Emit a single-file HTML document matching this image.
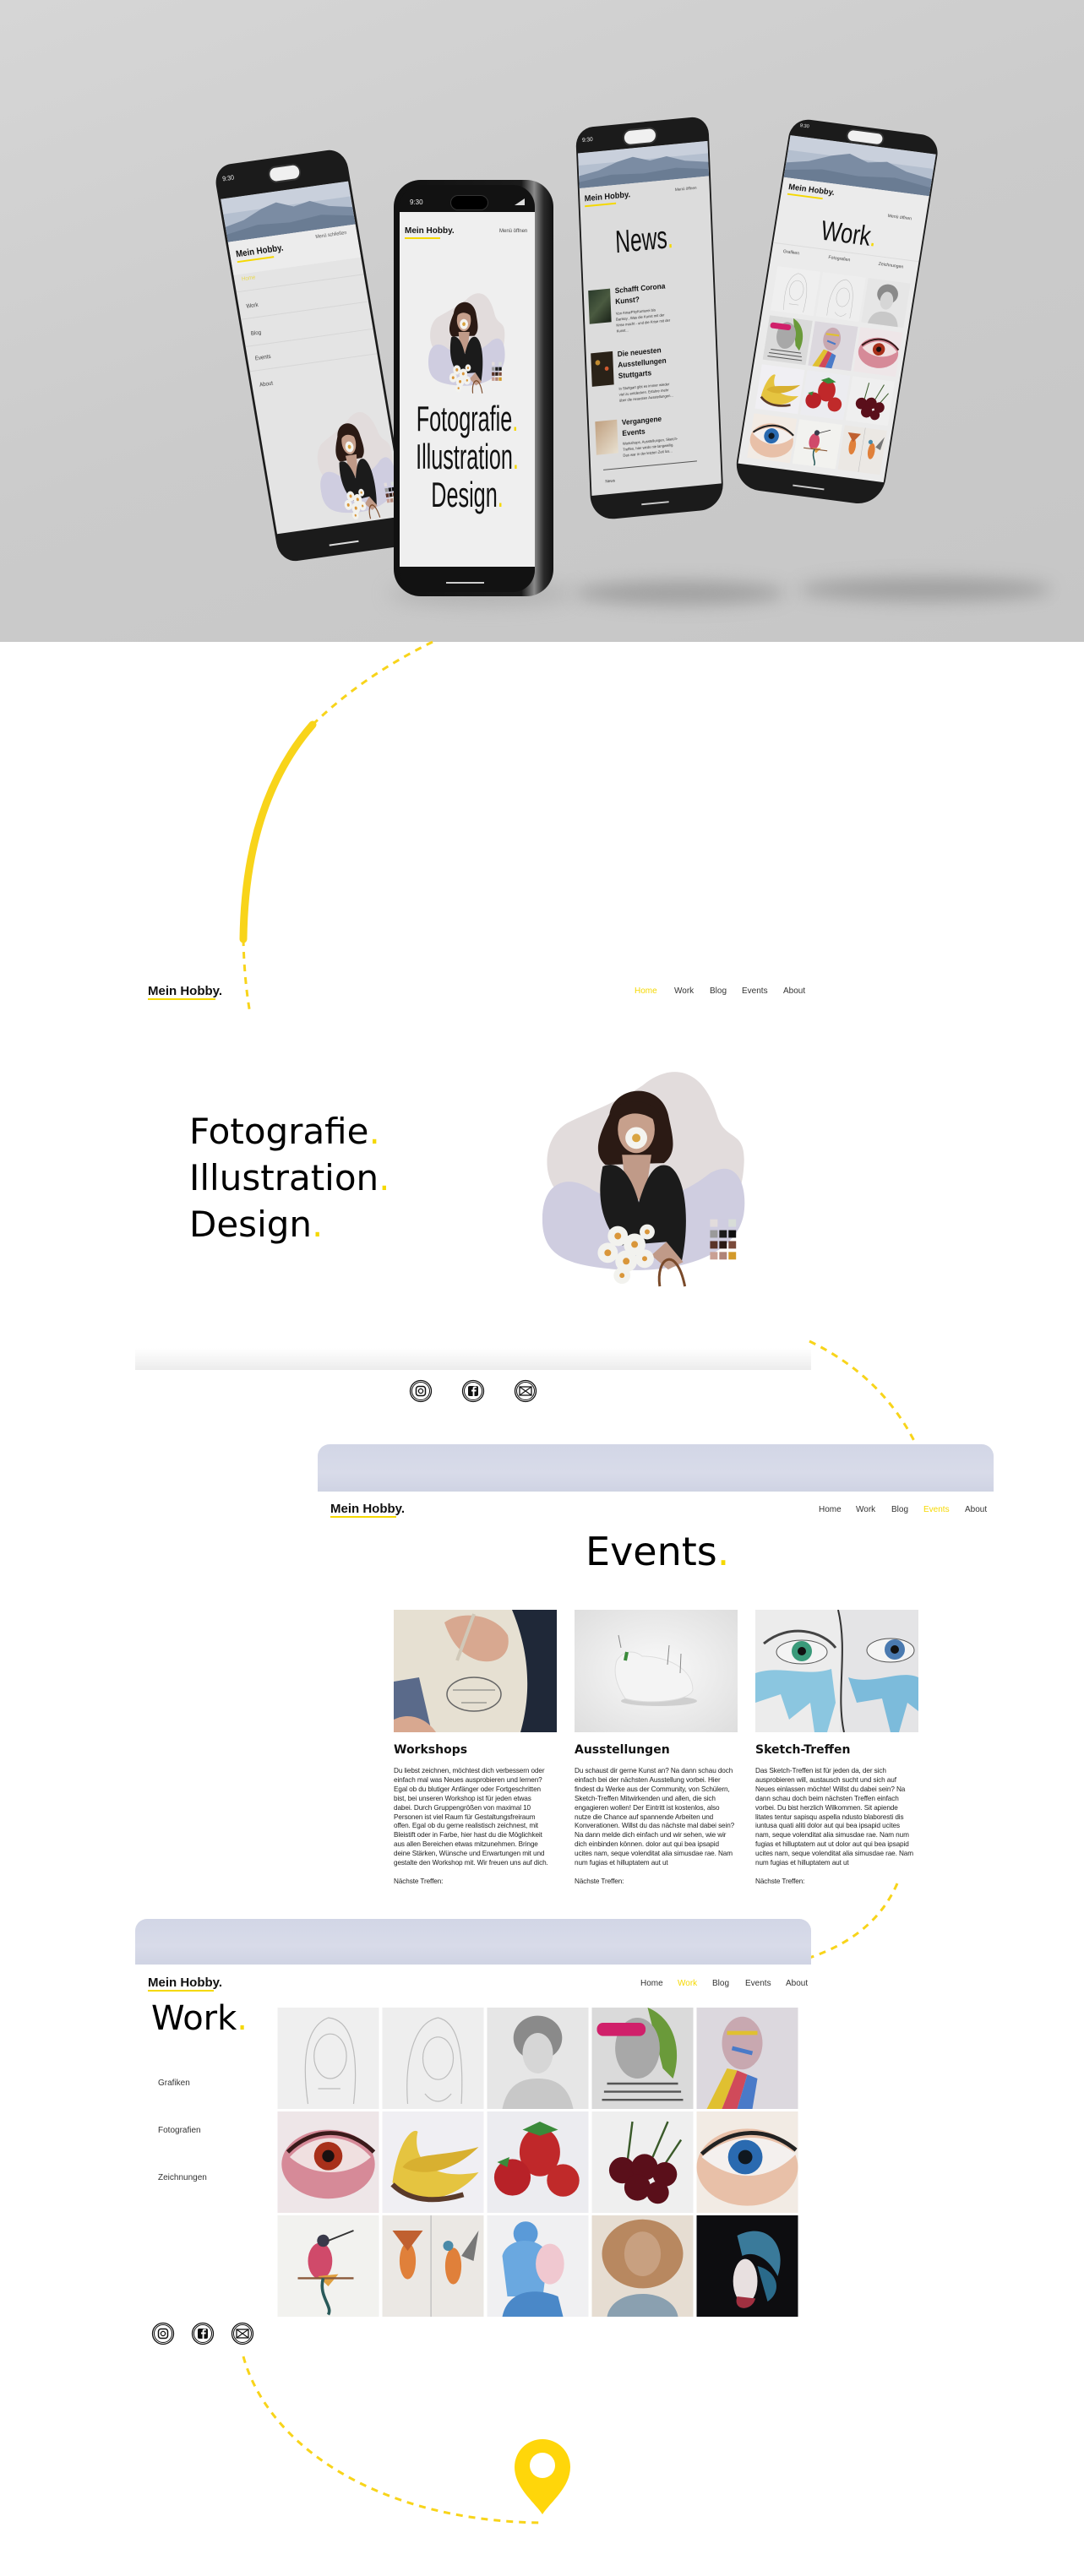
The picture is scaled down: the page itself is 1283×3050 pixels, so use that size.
<!DOCTYPE html>
<html><head><meta charset="utf-8">
<style>
*{margin:0;padding:0;box-sizing:border-box}
body{width:1283px;height:3050px;background:#fff;position:relative;overflow:hidden;font-family:"Liberation Sans",sans-serif;color:#111}
.a{position:absolute}
.y{color:#f5d800}
.nav{font-size:10px;color:#333;white-space:nowrap}
.logo{font-weight:bold;white-space:nowrap}
.ul{background:#f5d800;height:2px}
.ph{position:absolute;left:0;top:0;transform-origin:0 0;background:#1b1b1b;border-radius:24px;overflow:hidden}
.scr{position:absolute;overflow:hidden}
.t{position:absolute;white-space:nowrap}
.ev p{font-size:8.2px;line-height:10.9px;letter-spacing:-0.1px;color:#222;white-space:nowrap}
.ev h3{font-family:"DejaVu Sans",sans-serif;font-size:14px;font-weight:bold;margin:0 0 12px}
.cell{position:absolute;width:121px;height:120px}
</style></head><body>

<svg width="0" height="0" style="position:absolute">
<defs>
<symbol id="girl" viewBox="0 0 245 270">
<path d="M120,25 C150,0 190,0 208,60 C218,95 245,75 240,125 C236,175 205,200 170,235 L80,240 C40,230 55,175 30,160 C0,150 -5,90 30,70 C60,55 90,45 120,25Z" fill="#e2dcdc"/>
<path d="M0,185 C0,140 30,130 60,150 C95,170 150,170 200,130 C235,110 245,150 240,180 C230,230 160,250 90,245 C30,240 0,230 0,185Z" fill="#cfcde0"/>
<path d="M80,60 C85,25 140,20 150,60 C155,85 162,105 145,118 L75,120 C58,105 70,80 80,60Z" fill="#2b1a14"/>
<ellipse cx="112" cy="78" rx="22" ry="28" fill="#c7a08c"/>
<path d="M85,55 C95,40 130,40 140,60 L138,70 C120,55 100,55 88,70Z" fill="#2b1a14"/>
<path d="M95,108 L130,108 L122,165 L100,155Z" fill="#c09a88"/>
<path d="M72,122 C95,112 108,140 115,165 C125,132 135,115 152,122 C172,135 176,190 166,236 L148,242 L148,212 L95,216 C78,200 62,170 72,122Z" fill="#1b1b1b"/>
<path d="M148,212 L168,236 L150,245 L130,228Z" fill="#c09a88"/>
<circle cx="112" cy="88" r="13" fill="#f4f4f0"/><circle cx="112" cy="88" r="5" fill="#d9a441"/>
<g fill="#f2f2ee"><circle cx="90" cy="205" r="12"/><circle cx="110" cy="215" r="13"/><circle cx="78" cy="225" r="12"/><circle cx="100" cy="235" r="13"/><circle cx="122" cy="232" r="11"/><circle cx="95" cy="252" r="10"/><circle cx="125" cy="200" r="9"/></g>
<g fill="#d9963a"><circle cx="90" cy="205" r="4"/><circle cx="110" cy="215" r="4"/><circle cx="78" cy="225" r="4"/><circle cx="100" cy="235" r="4"/><circle cx="122" cy="232" r="3"/><circle cx="95" cy="252" r="3"/><circle cx="125" cy="200" r="3"/></g>
<path d="M140,265 C135,230 160,215 170,265" fill="none" stroke="#7a4a2a" stroke-width="3"/>
<rect x="200" y="185" width="9" height="9" fill="#e2dcdc"/><rect x="211" y="185" width="9" height="9" fill="#cfcde0"/><rect x="222" y="185" width="9" height="9" fill="#d8ddd8"/>
<rect x="200" y="198" width="9" height="9" fill="#9a9a9a"/><rect x="211" y="198" width="9" height="9" fill="#1b1b1b"/><rect x="222" y="198" width="9" height="9" fill="#101010"/>
<rect x="200" y="211" width="9" height="9" fill="#5a3428"/><rect x="211" y="211" width="9" height="9" fill="#2b1a14"/><rect x="222" y="211" width="9" height="9" fill="#7a4a3a"/>
<rect x="200" y="224" width="9" height="9" fill="#c9a094"/><rect x="211" y="224" width="9" height="9" fill="#b08478"/><rect x="222" y="224" width="9" height="9" fill="#d39a2a"/>
</symbol>
<symbol id="mtn" viewBox="0 0 100 40" preserveAspectRatio="none">
<rect width="100" height="40" fill="#b4bfcf"/><rect width="100" height="14" fill="#c9d0dc"/>
<path d="M0,40 L0,26 L15,22 L30,14 L42,10 L55,16 L68,13 L82,20 L100,24 L100,40Z" fill="#7b8ca3"/>
<path d="M0,40 L0,33 L25,28 L50,30 L75,27 L100,32 L100,40Z" fill="#6a7c93"/>
</symbol>
<symbol id="a1" viewBox="0 0 100 100"><rect width="100" height="100" fill="#efefef"/><g fill="none" stroke="#bcbcbc" stroke-width="1"><path d="M30,95 C25,60 25,20 50,10 C75,12 80,50 75,95"/><ellipse cx="52" cy="48" rx="16" ry="22"/><path d="M40,80 L62,80"/></g></symbol>
<symbol id="a2" viewBox="0 0 100 100"><rect width="100" height="100" fill="#eeeeee"/><g fill="none" stroke="#bdbdbd" stroke-width="1"><path d="M25,95 C22,55 30,15 55,10 C78,15 80,55 78,95"/><ellipse cx="55" cy="50" rx="15" ry="21"/><path d="M42,85 C50,95 60,95 68,85"/></g></symbol>
<symbol id="a3" viewBox="0 0 100 100"><rect width="100" height="100" fill="#e6e6e6"/><ellipse cx="50" cy="30" rx="24" ry="22" fill="#8a8a8a"/><ellipse cx="50" cy="45" rx="15" ry="20" fill="#d6d6d6"/><path d="M15,100 C20,75 35,70 50,70 C65,70 80,75 85,100Z" fill="#c8c8c8"/></symbol>
<symbol id="a4" viewBox="0 0 100 100"><rect width="100" height="100" fill="#dadada"/><path d="M55,0 C80,10 90,40 80,70 L70,60 Z" fill="#6a9a3a"/><ellipse cx="45" cy="40" rx="22" ry="30" fill="#a8a8a8"/><rect x="5" y="15" width="48" height="13" rx="6" fill="#d0206a"/><g stroke="#555" stroke-width="2"><path d="M15,75 L85,75"/><path d="M12,83 L88,83"/><path d="M10,91 L90,91"/></g></symbol>
<symbol id="a5" viewBox="0 0 100 100"><rect width="100" height="100" fill="#dcd8de"/><ellipse cx="45" cy="35" rx="20" ry="26" fill="#c8a8b0"/><path d="M10,100 L30,60 L40,62 L25,100Z" fill="#e0c030"/><path d="M25,100 L40,62 L50,66 L40,100Z" fill="#d04a5a"/><path d="M40,100 L50,66 L60,70 L55,100Z" fill="#4a7ac8"/><path d="M30,25 L60,25" stroke="#e0c030" stroke-width="4"/><path d="M35,40 L55,45" stroke="#4a7ac8" stroke-width="4"/></symbol>
<symbol id="a6" viewBox="0 0 100 100"><rect width="100" height="100" fill="#eee6e8"/><ellipse cx="50" cy="52" rx="46" ry="34" fill="#d68a98"/><path d="M12,45 C35,20 70,20 92,45 C70,65 35,65 12,45Z" fill="#f0e0e0"/><circle cx="50" cy="44" r="14" fill="#a8301a"/><circle cx="50" cy="44" r="6" fill="#1a1010"/><path d="M10,40 C35,15 70,15 95,40" stroke="#3a1a1a" stroke-width="4" fill="none"/></symbol>
<symbol id="a7" viewBox="0 0 100 100"><rect width="100" height="100" fill="#f0eff3"/><path d="M10,70 C15,30 30,15 35,20 C30,40 40,70 95,60 C70,90 30,95 10,70Z" fill="#e5c440"/><path d="M20,55 C30,40 60,45 95,35 C70,60 40,65 20,55Z" fill="#d8b030"/><path d="M10,72 C30,92 60,88 80,82" stroke="#5a3a2a" stroke-width="5" fill="none"/></symbol>
<symbol id="a8" viewBox="0 0 100 100"><rect width="100" height="100" fill="#ececf0"/><ellipse cx="52" cy="40" rx="20" ry="24" fill="#c0282a"/><ellipse cx="25" cy="65" rx="18" ry="18" fill="#b82228"/><ellipse cx="75" cy="68" rx="16" ry="16" fill="#c02a2a"/><path d="M35,18 L52,10 L70,18 L52,24Z" fill="#3a8a3a"/><path d="M10,50 L22,45 L20,55Z" fill="#3a8a3a"/></symbol>
<symbol id="a9" viewBox="0 0 100 100"><rect width="100" height="100" fill="#efefef"/><g stroke="#3a5a2a" stroke-width="2" fill="none"><path d="M35,50 L40,10"/><path d="M60,45 L75,10"/><path d="M70,55 L88,28"/></g><g fill="#5a0f1a"><circle cx="30" cy="58" r="13"/><circle cx="52" cy="55" r="13"/><circle cx="72" cy="62" r="12"/><circle cx="45" cy="75" r="13"/><circle cx="65" cy="80" r="11"/></g></symbol>
<symbol id="a10" viewBox="0 0 100 100"><rect width="100" height="100" fill="#f2ebe4"/><ellipse cx="50" cy="55" rx="50" ry="38" fill="#e8c0a8"/><path d="M5,45 C35,20 70,20 98,42 C70,70 35,70 5,45Z" fill="#f4f0ee"/><circle cx="48" cy="45" r="17" fill="#2a6ab0"/><circle cx="48" cy="45" r="7" fill="#101820"/><path d="M5,42 C35,15 70,15 98,38" stroke="#222" stroke-width="4" fill="none"/></symbol>
<symbol id="a11" viewBox="0 0 100 100"><rect width="100" height="100" fill="#f2f2ef"/><ellipse cx="42" cy="45" rx="12" ry="18" fill="#d04a6a"/><circle cx="45" cy="25" r="6" fill="#3a3a4a"/><path d="M50,25 L75,15" stroke="#333" stroke-width="1.5"/><path d="M40,60 L50,70 L60,58Z" fill="#e0a040"/><path d="M20,62 L75,62" stroke="#8a5a3a" stroke-width="2"/><path d="M45,62 C40,80 55,90 50,98" stroke="#2a5a5a" stroke-width="3" fill="none"/></symbol>
<symbol id="a12" viewBox="0 0 100 100"><rect width="100" height="100" fill="#ebe8e4"/><path d="M48,0 L48,100" stroke="#bbb"/><ellipse cx="25" cy="45" rx="8" ry="18" fill="#e0803a"/><path d="M10,15 L25,35 L40,15" fill="#c06030"/><ellipse cx="70" cy="50" rx="8" ry="18" fill="#e0803a"/><circle cx="65" cy="30" r="5" fill="#4a8aa8"/><path d="M78,40 L95,15 L90,45Z" fill="#777"/></symbol>
<symbol id="a13" viewBox="0 0 100 100"><rect width="100" height="100" fill="#f0f0f2"/><circle cx="38" cy="18" r="12" fill="#5a9ad8"/><path d="M15,40 C20,20 55,20 60,40 L55,80 L20,80Z" fill="#6aa8e0"/><ellipse cx="62" cy="48" rx="14" ry="20" fill="#f0c8d0"/><path d="M15,100 C20,75 45,70 70,80 L75,100Z" fill="#4a88c8"/></symbol>
<symbol id="a14" viewBox="0 0 100 100"><rect width="100" height="100" fill="#e6ddd2"/><ellipse cx="50" cy="38" rx="40" ry="34" fill="#b88860"/><ellipse cx="50" cy="38" rx="18" ry="22" fill="#c8a080"/><path d="M15,100 C20,70 80,70 85,100Z" fill="#8aa0b0"/></symbol>
<symbol id="a15" viewBox="0 0 100 100"><rect width="100" height="100" fill="#0d0d10"/><path d="M40,20 C70,5 90,30 80,60 C70,40 55,35 45,40Z" fill="#3a7a9a"/><ellipse cx="48" cy="65" rx="12" ry="22" fill="#e8e0e0"/><path d="M40,80 C35,95 55,95 58,82Z" fill="#a03040"/><path d="M60,50 C80,55 85,75 70,85Z" fill="#2a6a8a"/></symbol>
</defs>
</svg>

<!-- HERO MOCKUP -->
<div class="a" style="left:0;top:0;width:1283px;height:760px;background:linear-gradient(160deg,#d6d6d6,#cbcbcb 50%,#c6c6c6)"></div>
<div class="a" style="left:680px;top:688px;width:250px;height:28px;border-radius:50%;background:#8f8f8f;filter:blur(10px);opacity:.7"></div>
<div class="a" style="left:945px;top:684px;width:300px;height:28px;border-radius:50%;background:#8f8f8f;filter:blur(10px);opacity:.7"></div>
<div class="a" style="left:460px;top:690px;width:220px;height:26px;border-radius:50%;background:#a0a0a0;filter:blur(12px);opacity:.6"></div>

<!-- phone 1 -->
<div class="ph" style="width:180px;height:480px;transform:matrix(0.867,-0.122,0.165,0.979,252,197)">
 <div class="t" style="left:10px;top:12px;color:#eee;font-size:8px">9:30</div>
 <div class="t" style="left:72px;top:10px;width:44px;height:20px;border-radius:10px;background:#f0f0f0;border:2px solid #333"></div>
 <div class="scr" style="left:3px;top:40px;width:174px;height:405px;background:#e4e4e4">
  <svg class="a" style="left:0;top:0" width="174" height="52"><use href="#mtn" width="174" height="52"/></svg>
  <div class="a" style="left:0;top:52px;width:174px;height:40px;background:#ececec"></div>
  <div class="t logo" style="left:8px;top:62px;font-size:11px">Mein Hobby.</div>
  <div class="a ul" style="left:8px;top:76px;width:50px"></div>
  <div class="t" style="left:118px;top:58px;font-size:6px;color:#555">Menü schließen</div>
  <div class="t" style="left:10px;top:95px;font-size:7px;color:#e8d850">Home</div>
  <div class="a" style="left:0;top:112px;width:174px;height:1px;background:#d6d6d6"></div>
  <div class="t" style="left:10px;top:128px;font-size:7px;color:#444">Work</div>
  <div class="a" style="left:0;top:145px;width:174px;height:1px;background:#d6d6d6"></div>
  <div class="t" style="left:10px;top:161px;font-size:7px;color:#444">Blog</div>
  <div class="a" style="left:0;top:178px;width:174px;height:1px;background:#d6d6d6"></div>
  <div class="t" style="left:10px;top:191px;font-size:7px;color:#444">Events</div>
  <div class="a" style="left:0;top:208px;width:174px;height:1px;background:#d6d6d6"></div>
  <div class="t" style="left:10px;top:223px;font-size:7px;color:#444">About</div>
  <svg class="a" style="left:68px;top:270px" width="105" height="135" viewBox="0 0 245 270" preserveAspectRatio="none"><use href="#girl"/></svg>
 </div>
 <div class="a" style="left:70px;top:466px;width:40px;height:2px;background:#ddd"></div>
</div>

<!-- phone 2 front -->
<div class="a" style="left:466px;top:213px;width:189px;height:493px;border-radius:32px;background:linear-gradient(90deg,#111 0,#1a1a1a 80%,#8a8a8a 88%,#2a2a2a 94%,#111 100%)">
 <div class="a" style="left:7px;top:6px;width:160px;height:482px;border-radius:26px;background:#121212;overflow:hidden">
  <div class="t" style="left:12px;top:16px;color:#eee;font-size:8px">9:30</div>
  <div class="a" style="left:60px;top:12px;width:45px;height:18px;border-radius:9px;background:#000;border:1px solid #333"></div>
  <div class="a" style="left:136px;top:16px;width:12px;height:8px;background:#ddd;clip-path:polygon(100% 0,100% 100%,0 100%)"></div>
  <div class="scr" style="left:0;top:32px;width:160px;height:420px;background:#efefef">
   <div class="t logo" style="left:6px;top:17px;font-size:10px">Mein Hobby.</div>
   <div class="a ul" style="left:6px;top:30px;width:42px"></div>
   <div class="t" style="left:118px;top:20px;font-size:6px;color:#444">Menü öffnen</div>
   <svg class="a" style="left:34px;top:92px" width="92" height="125" viewBox="0 0 245 270" preserveAspectRatio="none"><use href="#girl"/></svg>
   <div class="t" style="left:-40px;width:240px;top:222px;text-align:center;font-size:42px;line-height:45px;transform:scaleX(.6)">Fotografie<span class="y">.</span></div>
   <div class="t" style="left:-40px;width:240px;top:267px;text-align:center;font-size:42px;line-height:45px;transform:scaleX(.6)">Illustration<span class="y">.</span></div>
   <div class="t" style="left:-40px;width:240px;top:312px;text-align:center;font-size:42px;line-height:45px;transform:scaleX(.6)">Design<span class="y">.</span></div>
  </div>
  <div class="a" style="left:55px;top:470px;width:45px;height:2px;background:#ccc"></div>
 </div>
</div>

<!-- phone 3 news -->
<div class="ph" style="width:170px;height:470px;border-radius:22px 22px 30px 30px;transform:matrix(0.924,-0.088,0.040,0.989,681,152)">
 <div class="t" style="left:8px;top:12px;color:#eee;font-size:7px">9:30</div>
 <div class="t" style="left:60px;top:7px;width:44px;height:20px;border-radius:10px;background:#f0f0f0;border:2px solid #333"></div>
 <div class="scr" style="left:2px;top:30px;width:166px;height:410px;background:#dcdcdc">
  <svg class="a" style="left:0;top:0" width="166" height="42"><use href="#mtn" width="166" height="42"/></svg>
  <div class="t logo" style="left:6px;top:50px;font-size:10px">Mein Hobby.</div>
  <div class="a ul" style="left:6px;top:63px;width:40px"></div>
  <div class="t" style="left:122px;top:52px;font-size:5px;color:#444">Menü öffnen</div>
  <div class="t" style="left:-20px;width:200px;top:90px;text-align:center;font-size:38px;transform:scaleX(.7)">News<span class="y">.</span></div>
  <div class="a" style="left:6px;top:165px;width:28px;height:40px;background:linear-gradient(135deg,#2a3a2a,#4a5a40,#1a2218)"></div>
  <div class="t" style="left:40px;top:162px;font-size:9px;font-weight:bold;line-height:13px">Schafft Corona<br>Kunst?</div>
  <div class="t" style="left:40px;top:192px;font-size:4.5px;line-height:7px;color:#333">Von AmarPhyKunterei bis<br>Banksy...Was die Kunst mit der<br>Krise macht - und die Krise mit der<br>Kunst...</div>
  <div class="a" style="left:6px;top:240px;width:28px;height:40px;background:radial-gradient(circle at 30% 30%,#c08a30 0 8%,transparent 10%),radial-gradient(circle at 70% 50%,#d05a30 0 8%,transparent 10%),#2a2218"></div>
  <div class="t" style="left:40px;top:238px;font-size:9px;font-weight:bold;line-height:13px">Die neuesten<br>Ausstellungen<br>Stuttgarts</div>
  <div class="t" style="left:40px;top:282px;font-size:4.5px;line-height:7px;color:#333">In Stuttgart gibt es immer wieder<br>viel zu entdecken. Erfahre mehr<br>über die neuesten Ausstellungen...</div>
  <div class="a" style="left:8px;top:322px;width:28px;height:40px;background:linear-gradient(135deg,#c0a080,#e8e0d0)"></div>
  <div class="t" style="left:42px;top:320px;font-size:9px;font-weight:bold;line-height:13px">Vergangene<br>Events</div>
  <div class="t" style="left:42px;top:348px;font-size:4.5px;line-height:7px;color:#333">Workshops, Ausstellungen, Sketch-<br>Treffen, hier wirds nie langweilig.<br>Das war in der letzten Zeit los...</div>
  <div class="a" style="left:16px;top:380px;width:120px;height:1px;background:#555"></div>
  <div class="t" style="left:18px;top:392px;font-size:5px;color:#333">News</div>
 </div>
 <div class="a" style="left:65px;top:455px;width:35px;height:2px;background:#ccc"></div>
</div>

<!-- phone 4 work -->
<div class="ph" style="width:190px;height:460px;border-radius:24px 24px 34px 34px;transform:matrix(0.926,0.121,-0.152,0.952,937,139)">
 <div class="t" style="left:12px;top:6px;color:#eee;font-size:6px">9:30</div>
 <div class="t" style="left:72px;top:4px;width:48px;height:17px;border-radius:9px;background:#f0f0f0;border:2px solid #333"></div>
 <div class="scr" style="left:2px;top:22px;width:186px;height:408px;background:#ebebeb">
  <svg class="a" style="left:0;top:0" width="186" height="52"><use href="#mtn" width="186" height="52"/></svg>
  <div class="t logo" style="left:8px;top:58px;font-size:10px">Mein Hobby.</div>
  <div class="a ul" style="left:8px;top:71px;width:45px"></div>
  <div class="t" style="left:138px;top:80px;font-size:5.5px;color:#444">Menü öffnen</div>
  <div class="t" style="left:-7px;width:200px;top:92px;text-align:center;font-size:34px;transform:scaleX(.8)">Work<span class="y">.</span></div>
  <div class="a" style="left:0;top:133px;width:186px;height:1px;background:#dcdcdc"></div>
  <div class="t" style="left:14px;top:140px;font-size:5.5px;color:#444">Grafiken</div>
  <div class="t" style="left:72px;top:140px;font-size:5.5px;color:#444">Fotografien</div>
  <div class="t" style="left:136px;top:140px;font-size:5.5px;color:#444">Zeichnungen</div>
  <svg class="a" style="left:10px;top:160px" width="170" height="250">
   <use href="#a1" x="0" y="0" width="55" height="58"/><use href="#a2" x="58" y="0" width="55" height="58"/><use href="#a3" x="116" y="0" width="55" height="58"/>
   <use href="#a4" x="0" y="61" width="55" height="58"/><use href="#a5" x="58" y="61" width="55" height="58"/><use href="#a6" x="116" y="61" width="55" height="58"/>
   <use href="#a7" x="0" y="122" width="55" height="58"/><use href="#a8" x="58" y="122" width="55" height="58"/><use href="#a9" x="116" y="122" width="55" height="58"/>
   <use href="#a10" x="0" y="183" width="55" height="58"/><use href="#a11" x="58" y="183" width="55" height="58"/><use href="#a12" x="116" y="183" width="55" height="58"/>
  </svg>
 </div>
 <div class="a" style="left:75px;top:447px;width:40px;height:2px;background:#ccc"></div>
</div>

<!-- dashed curves -->
<svg class="a" style="left:0;top:0;pointer-events:none" width="1283" height="3050">
 <g fill="none" stroke="#f8d41a" stroke-width="3" stroke-dasharray="8 7">
  <path d="M512,760 Q430,800 370,858"/>
  <path d="M288,1112 Q289,1160 296,1200"/>
  <path d="M958,1588 Q1045,1630 1085,1712"/>
  <path d="M1062,2230 Q1035,2292 958,2318"/>
  <path d="M288,2790 C315,2890 440,2985 642,2987"/>
 </g>
 <path d="M370,858 Q290,950 288,1112" fill="none" stroke="#f8d41a" stroke-width="9" stroke-linecap="round"/>
 <path d="M609,2921 A33,33 0 1 1 675,2921 C675,2945 652,2962 642,2977 C632,2962 609,2945 609,2921Z" fill="#ffd60a"/>
 <circle cx="642" cy="2919" r="15" fill="#fff"/>
</svg>

<!-- SECTION 2 HOME -->
<div class="t logo" style="left:175px;top:1165px;font-size:15px">Mein Hobby.</div>
<div class="a ul" style="left:175px;top:1182px;width:80px"></div>
<div class="t nav" style="left:751px;top:1168px;color:#f5d800">Home</div>
<div class="t nav" style="left:798px;top:1168px">Work</div>
<div class="t nav" style="left:840px;top:1168px">Blog</div>
<div class="t nav" style="left:878px;top:1168px">Events</div>
<div class="t nav" style="left:927px;top:1168px">About</div>
<div class="t" style="left:224px;top:1312px;font-family:'DejaVu Sans',sans-serif;font-size:42px;line-height:55px;color:#000">Fotografie<span class="y">.</span><br>Illustration<span class="y">.</span><br>Design<span class="y">.</span></div>
<svg class="a" style="left:641px;top:1260px" width="245" height="268" viewBox="0 0 245 270"><use href="#girl"/></svg>
<div class="a" style="left:160px;top:1596px;width:800px;height:26px;background:linear-gradient(180deg,#fff,#ececec)"></div>

<svg class="a" style="left:484px;top:1633px" width="160" height="30">
 <g fill="none" stroke="#111">
  <circle cx="14" cy="14" r="12.5" stroke-width="1.3"/><circle cx="14" cy="14" r="10.5" stroke-width="1"/>
  <rect x="8.5" y="8.5" width="11" height="11" rx="3" stroke-width="1.5"/><circle cx="14" cy="14" r="2.6" stroke-width="1.3"/>
  <circle cx="76" cy="14" r="12.5" stroke-width="1.3"/><circle cx="76" cy="14" r="10.5" stroke-width="1"/>
  <circle cx="138" cy="14" r="12.5" stroke-width="1.3"/><circle cx="138" cy="14" r="10.5" stroke-width="1"/>
  <rect x="131" y="9" width="14" height="10" stroke-width="1.3"/><path d="M131,9 L145,19 M145,9 L131,19" stroke-width="1.1"/>
 </g>
 <rect x="70" y="8" width="12" height="12" rx="2" fill="#111"/>
 <path d="M77.5,20 L77.5,14.5 L79.5,14.5 L79.8,12.5 L77.5,12.5 L77.5,11.3 C77.5,10.7 77.8,10.4 78.5,10.4 L79.9,10.4 L79.9,8.6 L78,8.6 C76.3,8.6 75.6,9.6 75.6,11 L75.6,12.5 L74,12.5 L74,14.5 L75.6,14.5 L75.6,20Z" fill="#fff"/>
</svg>

<!-- SECTION 3 EVENTS -->
<div class="a" style="left:376px;top:1710px;width:800px;height:56px;border-radius:14px 14px 0 0;background:linear-gradient(180deg,#d2d6e6,#d8dbe9 60%,#cfd3e3)"></div>
<div class="t logo" style="left:391px;top:1778px;font-size:15px">Mein Hobby.</div>
<div class="a ul" style="left:391px;top:1795px;width:78px"></div>
<div class="t nav" style="left:969px;top:1782px">Home</div>
<div class="t nav" style="left:1013px;top:1782px">Work</div>
<div class="t nav" style="left:1055px;top:1782px">Blog</div>
<div class="t nav" style="left:1093px;top:1782px;color:#f5d800">Events</div>
<div class="t nav" style="left:1142px;top:1782px">About</div>
<div class="t" style="left:693px;top:1810px;font-family:'DejaVu Sans',sans-serif;font-size:46px;color:#000">Events<span class="y">.</span></div>

<svg class="a" style="left:466px;top:1906px" width="193" height="145" viewBox="0 0 193 145" preserveAspectRatio="none">
 <rect width="193" height="145" fill="#e6e0d2"/>
 <path d="M140,0 L193,0 L193,145 L150,145 C160,110 165,60 140,0Z" fill="#1f2838"/>
 <path d="M60,15 C80,0 120,5 135,30 C140,55 120,65 100,60 C85,55 70,45 60,15Z" fill="#d8a890"/>
 <path d="M95,5 L75,60" stroke="#d0c8b8" stroke-width="4"/>
 <ellipse cx="95" cy="100" rx="32" ry="20" fill="none" stroke="#666" stroke-width="1.5"/>
 <path d="M70,95 L120,95 M80,110 L110,110" stroke="#777"/>
 <path d="M0,85 L30,80 L45,145 L0,145Z" fill="#5a6a8a"/>
 <path d="M0,130 C20,120 40,130 50,145 L0,145Z" fill="#d8a890"/>
</svg>
<svg class="a" style="left:680px;top:1906px" width="193" height="145" viewBox="0 0 193 145">
 <defs><radialGradient id="sg" cx="50%" cy="50%" r="70%"><stop offset="0" stop-color="#fafafa"/><stop offset="1" stop-color="#dedede"/></radialGradient></defs>
 <rect width="193" height="145" fill="url(#sg)"/>
 <ellipse cx="100" cy="108" rx="45" ry="6" fill="#cfcfcf"/>
 <path d="M50,60 C60,45 75,50 80,55 C110,55 140,70 140,95 C135,110 80,112 60,105 C50,90 45,75 50,60Z" fill="#f4f4f4" stroke="#ddd"/>
 <path d="M60,60 L62,50" stroke="#3a8a3a" stroke-width="4"/>
 <path d="M55,45 L52,30 M110,65 L112,42 M125,75 L126,52" stroke="#888" stroke-width="1"/>
</svg>
<svg class="a" style="left:894px;top:1906px" width="193" height="145" viewBox="0 0 193 145">
 <rect width="193" height="145" fill="#ececec"/>
 <rect x="100" width="93" height="145" fill="#e4e4e6"/>
 <path d="M98,0 C110,50 95,100 105,145" stroke="#333" stroke-width="2" fill="none"/>
 <path d="M10,40 C40,15 80,25 95,45" stroke="#444" stroke-width="3" fill="none"/>
 <ellipse cx="55" cy="50" rx="30" ry="14" fill="#f4f4f4" stroke="#555"/>
 <circle cx="55" cy="49" r="12" fill="#3a9a7a"/><circle cx="55" cy="49" r="5" fill="#111"/>
 <ellipse cx="160" cy="48" rx="28" ry="14" fill="#f4f4f4" stroke="#555"/>
 <circle cx="165" cy="47" r="12" fill="#4a7ab0"/><circle cx="165" cy="47" r="5" fill="#111"/>
 <path d="M0,75 C30,65 60,80 90,70 L95,110 L85,145 L70,145 L65,110 L40,130 L30,100 L0,110Z" fill="#7ac0de" opacity=".85"/>
 <path d="M110,80 C140,90 170,70 193,80 L193,120 L180,110 L170,145 L160,145 L150,105 L120,110Z" fill="#6ab4d8" opacity=".85"/>
</svg>

<div class="a ev" style="left:466px;top:2064px"><h3>Workshops</h3>
<p>Du liebst zeichnen, möchtest dich verbessern oder<br>einfach mal was Neues ausprobieren und lernen?<br>Egal ob du blutiger Anfänger oder Fortgeschritten<br>bist, bei unseren Workshop ist für jeden etwas<br>dabei. Durch Gruppengrößen von maximal 10<br>Personen ist viel Raum für Gestaltungsfreiraum<br>offen. Egal ob du gerne realistisch zeichnest, mit<br>Bleistift oder in Farbe, hier hast du die Möglichkeit<br>aus allen Bereichen etwas mitzunehmen. Bringe<br>deine Stärken, Wünsche und Erwartungen mit und<br>gestalte den Workshop mit. Wir freuen uns auf dich.<br><br>Nächste Treffen:</p></div>
<div class="a ev" style="left:680px;top:2064px"><h3>Ausstellungen</h3>
<p>Du schaust dir gerne Kunst an? Na dann schau doch<br>einfach bei der nächsten Ausstellung vorbei. Hier<br>findest du Werke aus der Community, von Schülern,<br>Sketch-Treffen Mitwirkenden und allen, die sich<br>engagieren wollen! Der Eintritt ist kostenlos, also<br>nutze die Chance auf spannende Arbeiten und<br>Konverationen. Willst du das nächste mal dabei sein?<br>Na dann melde dich einfach und wir sehen, wie wir<br>dich einbinden können. dolor aut qui bea ipsapid<br>ucites nam, seque volenditat alia simusdae rae. Nam<br>num fugias et hilluptatem aut ut<br><br>Nächste Treffen:</p></div>
<div class="a ev" style="left:894px;top:2064px"><h3>Sketch-Treffen</h3>
<p>Das Sketch-Treffen ist für jeden da, der sich<br>ausprobieren will, austausch sucht und sich auf<br>Neues einlassen möchte! Willst du dabei sein? Na<br>dann schau doch beim nächsten Treffen einfach<br>vorbei. Du bist herzlich Wilkommen. Sit apiende<br>litates tentur sapisqu aspella ndusto blaboresti dis<br>iuntusa quati aliti dolor aut qui bea ipsapid ucites<br>nam, seque volenditat alia simusdae rae. Nam num<br>fugias et hilluptatem aut ut dolor aut qui bea ipsapid<br>ucites nam, seque volenditat alia simusdae rae. Nam<br>num fugias et hilluptatem aut ut<br><br>Nächste Treffen:</p></div>

<!-- SECTION 4 WORK -->
<div class="a" style="left:160px;top:2272px;width:800px;height:54px;border-radius:14px 14px 0 0;background:linear-gradient(180deg,#d2d6e6,#d8dbe9 60%,#cfd3e3)"></div>
<div class="t logo" style="left:175px;top:2339px;font-size:15px">Mein Hobby.</div>
<div class="a ul" style="left:175px;top:2356px;width:78px"></div>
<div class="t nav" style="left:758px;top:2343px">Home</div>
<div class="t nav" style="left:802px;top:2343px;color:#f5d800">Work</div>
<div class="t nav" style="left:843px;top:2343px">Blog</div>
<div class="t nav" style="left:882px;top:2343px">Events</div>
<div class="t nav" style="left:930px;top:2343px">About</div>
<div class="t" style="left:179px;top:2367px;font-family:'DejaVu Sans',sans-serif;font-size:40px;color:#000">Work<span class="y">.</span></div>
<div class="t" style="left:187px;top:2461px;font-size:10px;color:#333">Grafiken</div>
<div class="t" style="left:187px;top:2517px;font-size:10px;color:#333">Fotografien</div>
<div class="t" style="left:187px;top:2573px;font-size:10px;color:#333">Zeichnungen</div>

<svg class="a" style="left:328px;top:2377px" width="618" height="367">
 <use href="#a1" x="0" y="0" width="121" height="120"/><use href="#a2" x="124" y="0" width="121" height="120"/><use href="#a3" x="248" y="0" width="121" height="120"/><use href="#a4" x="372" y="0" width="121" height="120"/><use href="#a5" x="496" y="0" width="121" height="120"/>
 <use href="#a6" x="0" y="123" width="121" height="120"/><use href="#a7" x="124" y="123" width="121" height="120"/><use href="#a8" x="248" y="123" width="121" height="120"/><use href="#a9" x="372" y="123" width="121" height="120"/><use href="#a10" x="496" y="123" width="121" height="120"/>
 <use href="#a11" x="0" y="246" width="121" height="120"/><use href="#a12" x="124" y="246" width="121" height="120"/><use href="#a13" x="248" y="246" width="121" height="120"/><use href="#a14" x="372" y="246" width="121" height="120"/><use href="#a15" x="496" y="246" width="121" height="120"/>
</svg>

<svg class="a" style="left:179px;top:2749px" width="124" height="30">
 <g fill="none" stroke="#111">
  <circle cx="14" cy="14" r="12.5" stroke-width="1.3"/><circle cx="14" cy="14" r="10.5" stroke-width="1"/>
  <rect x="8.5" y="8.5" width="11" height="11" rx="3" stroke-width="1.5"/><circle cx="14" cy="14" r="2.6" stroke-width="1.3"/>
  <circle cx="61" cy="14" r="12.5" stroke-width="1.3"/><circle cx="61" cy="14" r="10.5" stroke-width="1"/>
  <circle cx="108" cy="14" r="12.5" stroke-width="1.3"/><circle cx="108" cy="14" r="10.5" stroke-width="1"/>
  <rect x="101" y="9" width="14" height="10" stroke-width="1.3"/><path d="M101,9 L115,19 M115,9 L101,19" stroke-width="1.1"/>
 </g>
 <rect x="55" y="8" width="12" height="12" rx="2" fill="#111"/>
 <path d="M62.5,20 L62.5,14.5 L64.5,14.5 L64.8,12.5 L62.5,12.5 L62.5,11.3 C62.5,10.7 62.8,10.4 63.5,10.4 L64.9,10.4 L64.9,8.6 L63,8.6 C61.3,8.6 60.6,9.6 60.6,11 L60.6,12.5 L59,12.5 L59,14.5 L60.6,14.5 L60.6,20Z" fill="#fff"/>
</svg>

</body></html>
